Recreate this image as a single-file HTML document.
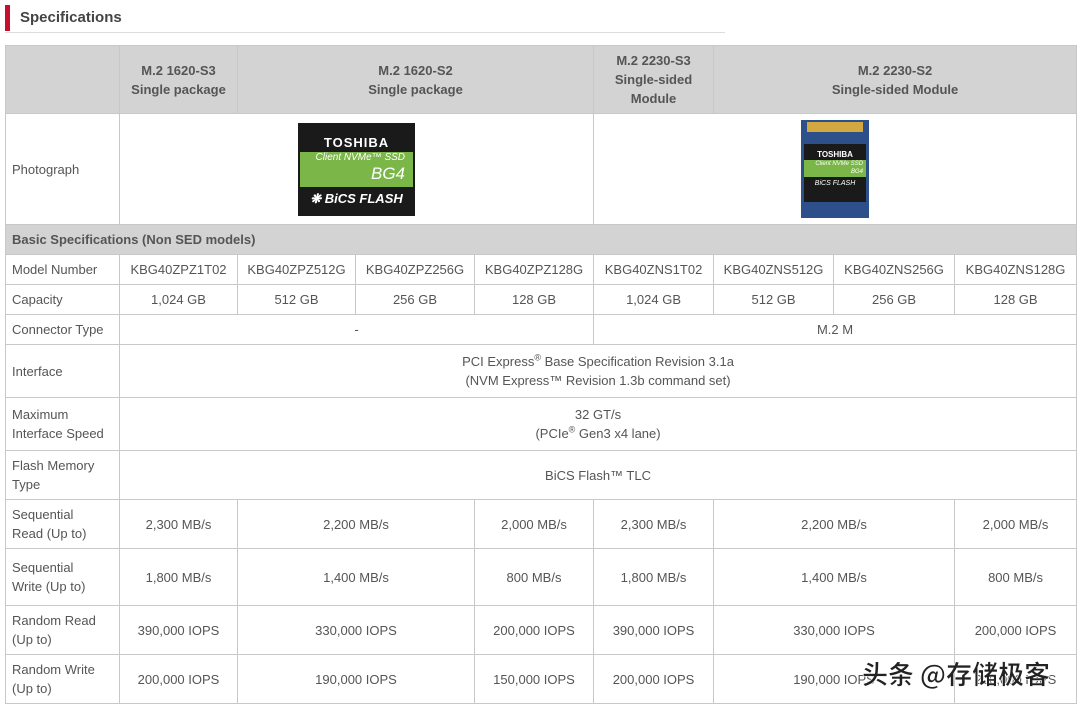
<!DOCTYPE html>
<html><head><meta charset="utf-8"><style>
body{margin:0;background:#fff;width:1081px;height:706px;overflow:hidden;position:relative;font-family:"Liberation Sans",Arial,sans-serif;color:#444}
.bar{position:absolute;left:5px;top:5px;width:5px;height:26px;background:#c8102e}
.title{position:absolute;left:20px;top:9px;font-size:15px;font-weight:bold;color:#444}
.line{position:absolute;left:5px;top:32px;width:720px;height:1px;background:#ddd}
table{position:absolute;left:5px;top:45px;border-collapse:collapse;table-layout:fixed;width:1071px}
td{border:1px solid #c8c8c8;font-size:13px;text-align:center;padding:0;line-height:19px;color:#555}
td.l{text-align:left;padding-left:6px;color:#555}
tr.h td{background:#d3d3d3;font-weight:bold;color:#555}
tr.s td{background:#d3d3d3;font-weight:bold;text-align:left;padding-left:6px}
sup{font-size:9px;line-height:0}
.wm{position:absolute;left:862px;top:655px;font-family:"Noto Sans CJK SC",sans-serif;font-size:26px;font-weight:bold;color:#222;letter-spacing:0px;-webkit-text-stroke:0.6px #fff;white-space:nowrap}
</style></head><body>
<div class="bar"></div><div class="title">Specifications</div><div class="line"></div>
<table>
<colgroup><col style="width:114px"><col style="width:118px"><col style="width:118px"><col style="width:119px"><col style="width:119px"><col style="width:120px"><col style="width:120px"><col style="width:121px"><col style="width:122px"></colgroup>
<tr class="h" style="height:68px"><td></td><td>M.2 1620-S3<br>Single package</td><td colspan="3">M.2 1620-S2<br>Single package</td><td>M.2 2230-S3<br>Single-sided<br>Module</td><td colspan="3">M.2 2230-S2<br>Single-sided Module</td></tr>
<tr style="height:111px"><td class="l">Photograph</td><td colspan="4">
<div style="display:inline-block;width:117px;height:93px;background:#1a1a1a;position:relative;vertical-align:middle">
<div style="color:#fff;font-weight:bold;font-size:13px;margin-top:10px;letter-spacing:1px">TOSHIBA</div>
<div style="position:absolute;left:2px;right:2px;top:29px;height:35px;background:#7ab648;color:#fff;font-style:italic;font-size:10px;line-height:12px;text-align:right;padding-right:8px">Client NVMe™ SSD<br><span style="font-size:17px;line-height:20px">BG4</span></div>
<div style="position:absolute;left:0;right:0;bottom:8px;color:#fff;font-weight:bold;font-style:italic;font-size:13px">❋ BiCS FLASH</div></div>
</td><td colspan="4">
<div style="display:inline-block;width:68px;height:98px;background:#2d4f8a;position:relative;vertical-align:middle">
<div style="position:absolute;left:3px;right:3px;top:24px;height:58px;background:#1a1a1a">
<div style="color:#fff;font-weight:bold;font-size:8px;line-height:10px;margin-top:6px">TOSHIBA</div>
<div style="background:#7ab648;color:#fff;font-style:italic;font-size:6px;line-height:8px;height:17px;text-align:right;padding-right:3px">Client NVMe SSD<br>BG4</div>
<div style="color:#fff;font-size:7px;line-height:14px;font-style:italic">BiCS FLASH</div></div>
<div style="position:absolute;left:6px;top:2px;width:56px;height:10px;background:#d4a840"></div></div>
</td></tr>
<tr class="s" style="height:30px"><td colspan="9">Basic Specifications (Non SED models)</td></tr>
<tr style="height:30px"><td class="l">Model Number</td><td>KBG40ZPZ1T02</td><td>KBG40ZPZ512G</td><td>KBG40ZPZ256G</td><td>KBG40ZPZ128G</td><td>KBG40ZNS1T02</td><td>KBG40ZNS512G</td><td>KBG40ZNS256G</td><td>KBG40ZNS128G</td></tr>
<tr style="height:30px"><td class="l">Capacity</td><td>1,024 GB</td><td>512 GB</td><td>256 GB</td><td>128 GB</td><td>1,024 GB</td><td>512 GB</td><td>256 GB</td><td>128 GB</td></tr>
<tr style="height:30px"><td class="l">Connector Type</td><td colspan="4">-</td><td colspan="4">M.2 M</td></tr>
<tr style="height:53px"><td class="l">Interface</td><td colspan="8">PCI Express<sup>®</sup> Base Specification Revision 3.1a<br>(NVM Express™ Revision 1.3b command set)</td></tr>
<tr style="height:53px"><td class="l">Maximum<br>Interface Speed</td><td colspan="8">32 GT/s<br>(PCIe<sup>®</sup> Gen3 x4 lane)</td></tr>
<tr style="height:49px"><td class="l">Flash Memory<br>Type</td><td colspan="8">BiCS Flash™ TLC</td></tr>
<tr style="height:49px"><td class="l">Sequential<br>Read (Up to)</td><td>2,300 MB/s</td><td colspan="2">2,200 MB/s</td><td>2,000 MB/s</td><td>2,300 MB/s</td><td colspan="2">2,200 MB/s</td><td>2,000 MB/s</td></tr>
<tr style="height:57px"><td class="l">Sequential<br>Write (Up to)</td><td>1,800 MB/s</td><td colspan="2">1,400 MB/s</td><td>800 MB/s</td><td>1,800 MB/s</td><td colspan="2">1,400 MB/s</td><td>800 MB/s</td></tr>
<tr style="height:49px"><td class="l">Random Read<br>(Up to)</td><td>390,000 IOPS</td><td colspan="2">330,000 IOPS</td><td>200,000 IOPS</td><td>390,000 IOPS</td><td colspan="2">330,000 IOPS</td><td>200,000 IOPS</td></tr>
<tr style="height:49px"><td class="l">Random Write<br>(Up to)</td><td>200,000 IOPS</td><td colspan="2">190,000 IOPS</td><td>150,000 IOPS</td><td>200,000 IOPS</td><td colspan="2">190,000 IOPS</td><td>200,000 IOPS</td></tr>
</table>
<div class="wm">头条 @存储极客</div>
</body></html>
